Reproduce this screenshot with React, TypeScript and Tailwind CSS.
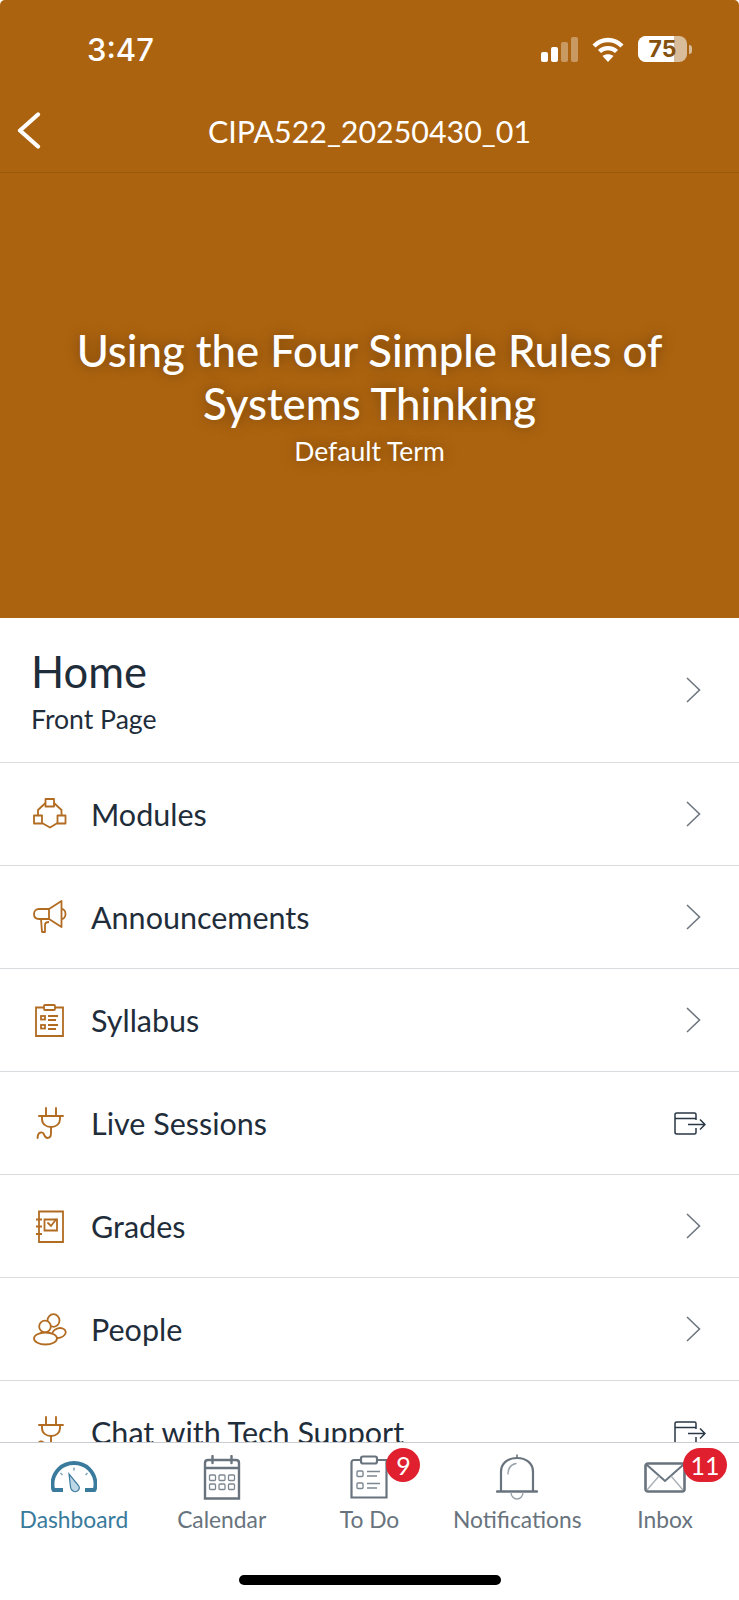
import type { ReactNode } from "react";

const ModulesIcon = () => (
  <svg width="34" height="32" viewBox="0 0 34 32" fill="none" stroke="#b26c22" strokeWidth="1.8" strokeLinejoin="round">
    <rect x="12.5" y="1" width="8.5" height="7.5" />
    <rect x="1" y="17.5" width="8" height="8" />
    <rect x="24.5" y="17.5" width="8" height="8" />
    <path d="M12.5 5 L5 12 V17.5 M21 5 L28.5 12 V17.5 M9 25 L17 29.5 L24.5 25" />
  </svg>
);

const AnnouncementsIcon = () => (
  <svg width="34" height="34" viewBox="0 0 34 34" fill="none" stroke="#b26c22" strokeWidth="1.8" strokeLinejoin="round">
    <path d="M16 9 H6 C3 9 1 11 1 14 C1 17 3 19 6 19 H16 Z" />
    <path d="M16 9 L28.5 1 V27 L16 19" />
    <path d="M28.5 9 C31 9 32.5 11.5 32.5 14 C32.5 16.5 31 19 28.5 19" />
    <path d="M8 19 L9 32 H12 V25 C12 23 14 22 16 22" />
  </svg>
);

const SyllabusIcon = () => (
  <svg width="32" height="33" viewBox="0 0 32 33" fill="none" stroke="#b26c22" strokeWidth="1.8">
    <path d="M11 3.5 H3 V32 H30 V3.5 H22" />
    <rect x="11" y="1" width="11" height="5" rx="1" />
    <rect x="8" y="12" width="4" height="3.5" />
    <rect x="8" y="21" width="4" height="3.5" />
    <path d="M15 12 H25 M15 16 H23 M15 21 H25 M15 25 H23" />
  </svg>
);

const PlugIcon = () => (
  <svg width="32" height="33" viewBox="0 0 32 33" fill="none" stroke="#b26c22" strokeWidth="1.9" strokeLinecap="round">
    <path d="M13 1 V9 M23 1 V9 M6 9 H30 M9 9 V12 C9 17 13 20 18 20 C23 20 27 17 27 12 V9" />
    <path d="M18 20 V26 C18 29 16.5 31 14.5 31 C12 31 11.5 28.5 10.5 26.5 C9.5 24.8 6 25 5 28 L4.5 31" />
  </svg>
);

const GradesIcon = () => (
  <svg width="32" height="33" viewBox="0 0 32 33" fill="none" stroke="#b26c22" strokeWidth="1.8">
    <path d="M6 8 V1.5 H30 V32 H6 V25" />
    <path d="M6 8 V25" />
    <path d="M3 9.5 H9 M3 16.5 H9 M3 24 H9" />
    <path d="M11.5 9.5 H24 V20.5 H11.5 Z" />
    <path d="M15 13 L18 16 L23 9.5" strokeLinecap="round" />
  </svg>
);

const PeopleIcon = () => (
  <svg width="34" height="33" viewBox="0 0 34 33" fill="none" stroke="#b26c22" strokeWidth="1.8">
    <ellipse cx="20.5" cy="7.5" rx="6" ry="6.3" />
    <circle cx="12" cy="13.5" r="5.8" fill="#fff" />
    <ellipse cx="26" cy="20" rx="6.8" ry="4.8" transform="rotate(-15 26 20)" />
    <ellipse cx="12.5" cy="25.5" rx="11.5" ry="6" fill="#fff" />
  </svg>
);

const ChevronIcon = () => (
  <svg width="15" height="26" viewBox="0 0 15 26" fill="none" stroke="#6e7780" strokeWidth="1.6">
    <path d="M1 1 L13.5 13 L1 25" />
  </svg>
);

const ExternalIcon = () => (
  <svg width="32" height="23" viewBox="0 0 32 23" fill="none" stroke="#2a3744" strokeWidth="1.5" strokeLinejoin="round">
    <path d="M22 8 V2.5 C22 1.5 21.3 1 20.5 1 H3 C2 1 1 1.7 1 2.5 V20.5 C1 21.3 1.8 22 3 22 H20.5 C21.3 22 22 21.3 22 20.5 V16" />
    <path d="M1 6.5 H22 M14 12.5 H30.5 M26 7.5 L31 12.5 L26 17.5" />
  </svg>
);

const DashboardIcon = () => (
  <svg width="46" height="32" viewBox="0 0 46 32" fill="none">
    <path d="M12 29 H2.5 C1.8 27 1.5 25.5 1.5 23.5 C1.5 11 11 2 23 2 C35 2 44.5 11 44.5 23.5 C44.5 25.5 44.2 27 43.5 29 H34" stroke="#3a7a9c" strokeWidth="3.8" strokeLinejoin="round" />
    <path d="M18 13 L19.5 26 C20 30 23.5 31.5 26 30.3 C28.5 29 29 26.5 27.5 24.5 Z" fill="#bcd7e6" stroke="#3a7a9c" strokeWidth="1.2" />
    <path d="M23 6.5 V9.5 M9.5 12 L11.5 14 M36.5 12 L34.5 14" stroke="#7ea6bc" strokeWidth="1.5" />
  </svg>
);

const CalendarIcon = () => (
  <svg width="38" height="45" viewBox="0 0 38 45" fill="none" stroke="#68737d">
    <path d="M2 8 C2 6 3 5 5 5 H33 C35 5 36 6 36 8 V43.5 H2 Z" strokeWidth="2.4" />
    <path d="M2 13 H36" strokeWidth="2.4" />
    <path d="M9.5 1 V8 M28.5 1 V8" strokeWidth="2.4" strokeLinecap="round" />
    <g strokeWidth="1.3" stroke="#7d8790">
      <rect x="6.5" y="20" width="6" height="5.5" rx="1" />
      <rect x="16" y="20" width="6" height="5.5" rx="1" />
      <rect x="25.5" y="20" width="6" height="5.5" rx="1" />
      <rect x="6.5" y="29" width="6" height="5.5" rx="1" />
      <rect x="16" y="29" width="6" height="5.5" rx="1" />
      <rect x="25.5" y="29" width="6" height="5.5" rx="1" />
    </g>
  </svg>
);

const TodoIcon = () => (
  <svg width="38" height="44" viewBox="0 0 38 44" fill="none" stroke="#68737d">
    <path d="M11 5 H4 C2.5 5 1.5 6 1.5 7.5 V42.5 H36.5 V5 H27" strokeWidth="2.2" />
    <rect x="11" y="1.5" width="16" height="7" rx="2" strokeWidth="2.2" />
    <g strokeWidth="1.4" stroke="#7d8790">
      <rect x="7" y="16" width="6" height="5.5" rx="1" />
      <rect x="7" y="28" width="6" height="5.5" rx="1" />
      <path d="M17 16.5 H30 M17 21 H27 M17 28.5 H30 M17 33 H27" />
    </g>
  </svg>
);

const BellIcon = () => (
  <svg width="42" height="46" viewBox="0 0 42 46" fill="none" stroke="#68737d">
    <path d="M1 37.5 H41" strokeWidth="2.4" strokeLinecap="round" />
    <path d="M5 37 V18 C5 9 12 4 21 4 C30 4 37 9 37 18 V37" strokeWidth="2.2" />
    <path d="M21 0.5 V4" strokeWidth="1.6" />
    <path d="M12 20 C12 14 15 10.5 20 9.5" stroke="#9aa2aa" strokeWidth="1.4" strokeLinecap="round" />
    <path d="M15 38 C15 42 17.5 45 21 45 C24.5 45 27 42 27 38" stroke="#9aa2aa" strokeWidth="1.4" />
  </svg>
);

const InboxIcon = () => (
  <svg width="42" height="31" viewBox="0 0 42 31" fill="none" stroke="#68737d">
    <rect x="1.5" y="1.5" width="39" height="28" rx="2.5" strokeWidth="2.6" />
    <path d="M3 3 L21 19 L39 3" strokeWidth="2" />
    <path d="M3 28 L15 14 M39 28 L27 14" stroke="#aab1b7" strokeWidth="1.4" />
  </svg>
);

const items: { label: string; icon: ReactNode; external?: boolean }[] = [
  { label: "Modules", icon: <ModulesIcon /> },
  { label: "Announcements", icon: <AnnouncementsIcon /> },
  { label: "Syllabus", icon: <SyllabusIcon /> },
  { label: "Live Sessions", icon: <PlugIcon />, external: true },
  { label: "Grades", icon: <GradesIcon /> },
  { label: "People", icon: <PeopleIcon /> },
  { label: "Chat with Tech Support", icon: <PlugIcon />, external: true },
];

const tabs: { label: string; icon: ReactNode; badge?: string; active?: boolean }[] = [
  { label: "Dashboard", icon: <DashboardIcon />, active: true },
  { label: "Calendar", icon: <CalendarIcon /> },
  { label: "To Do", icon: <TodoIcon />, badge: "9" },
  { label: "Notifications", icon: <BellIcon /> },
  { label: "Inbox", icon: <InboxIcon />, badge: "11" },
];

const StatusBar = () => (
  <div className="relative h-[100px] shrink-0">
    <span className="absolute left-[87px] top-[31px] font-['Inter',sans-serif] text-[31px] leading-[38px] font-medium text-white">
      3:47
    </span>
    <div className="absolute right-[47px] top-[36px] flex items-center">
      <svg width="37" height="25" viewBox="0 0 37 25" className="mr-[14px]">
        <rect x="0" y="15" width="7" height="10" rx="2" fill="#fff" />
        <rect x="10" y="10" width="7" height="15" rx="2" fill="#fff" />
        <rect x="20" y="5" width="7" height="20" rx="2" fill="#fff" fillOpacity="0.35" />
        <rect x="30" y="0" width="7" height="25" rx="2" fill="#fff" fillOpacity="0.35" />
      </svg>
      <svg width="32" height="25" viewBox="0 0 32 25" fill="none" stroke="#fff" strokeWidth="4.4" className="mr-[14px]">
        <path d="M2 9 C10 1 22 1 30 9" />
        <path d="M7.5 14.5 C12 10 20 10 24.5 14.5" />
        <path d="M16 25 L10.5 19 C13.5 16.5 18.5 16.5 21.5 19 Z" fill="#fff" stroke="none" />
      </svg>
      <div className="relative flex h-[26px] w-[49px] items-center justify-center overflow-hidden rounded-[8px] bg-[#d9bd9a]">
        <div className="absolute inset-y-0 left-0 w-[36px] bg-white" />
        <span className="relative font-['Inter',sans-serif] text-[23px] leading-none font-bold text-[#84500f]">75</span>
      </div>
      <div className="ml-[2px] h-[9px] w-[3px] rounded-r-full bg-[#d9bd9a]" />
    </div>
  </div>
);

export default function App() {
  return (
    <div className="flex h-[1600px] w-[739px] flex-col overflow-hidden bg-white font-['Lato',sans-serif] text-[#1f2d3b]">
      <header className="h-[618px] shrink-0 rounded-t-[5px] bg-[#ac630f] text-white">
        <StatusBar />
        <div className="relative flex h-[73px] items-center justify-center border-b border-[#9c590c]">
          <svg width="24" height="37" viewBox="0 0 24 37" fill="none" stroke="#fff" strokeWidth="4.2" strokeLinecap="round" strokeLinejoin="round" className="absolute left-[17px] top-[12px]">
            <path d="M21 2.5 L3 18.5 L21 34.5" />
          </svg>
          <span className="mb-[10px] text-[30.4px] leading-none">CIPA522_20250430_01</span>
        </div>
        <div className="flex flex-col items-center pt-[151px] text-center [text-shadow:0_0_14px_rgba(0,0,0,0.35)]">
          <h1 className="w-[640px] text-[43.7px] leading-[53px] font-medium">Using the Four Simple Rules of Systems Thinking</h1>
          <p className="mt-[4px] text-[26.5px] leading-[34px]">Default Term</p>
        </div>
      </header>

      <main className="min-h-0 flex-1 overflow-hidden">
        <div className="flex h-[145px] items-center justify-between border-b border-[#d9dcdf] pr-[38px] pl-[31px]">
          <div>
            <h2 className="text-[43.5px] leading-[54px]">Home</h2>
            <p className="mt-[3px] text-[26.6px] leading-[36px]">Front Page</p>
          </div>
          <ChevronIcon />
        </div>
        {items.map((item) => (
          <div key={item.label} className="flex h-[103px] items-center border-b border-[#d9dcdf] px-[33px]">
            <div className="flex w-[58px] shrink-0 items-center">{item.icon}</div>
            <span className="flex-1 text-[30.5px] leading-none">{item.label}</span>
            {item.external ? (
              <ExternalIcon />
            ) : (
              <div className="mr-[5px]">
                <ChevronIcon />
              </div>
            )}
          </div>
        ))}
      </main>

      <nav className="h-[158px] shrink-0 border-t border-[#c9cdd1] bg-white">
        <div className="grid h-[110px] grid-cols-5">
          {tabs.map((tab) => (
            <div key={tab.label} className="flex flex-col items-center">
              <div className="relative mt-[11px] flex h-[46px] items-center justify-center">
                {tab.icon}
                {tab.badge && (
                  <span
                    className={
                      tab.badge.length > 1
                        ? "absolute top-[-6px] left-[39px] flex h-[34px] w-[44px] items-center justify-center rounded-full bg-[#e0202e] text-[25px] leading-none text-white"
                        : "absolute top-[-6px] left-[36px] flex h-[34px] w-[34px] items-center justify-center rounded-full bg-[#e0202e] text-[25px] leading-none text-white"
                    }
                  >
                    {tab.badge}
                  </span>
                )}
              </div>
              <span className={tab.active ? "mt-[4px] text-[22.8px] leading-[30px] text-[#3a7a9c]" : "mt-[4px] text-[22.8px] leading-[30px] text-[#68737d]"}>
                {tab.label}
              </span>
            </div>
          ))}
        </div>
        <div className="mx-auto mt-[22px] h-[10px] w-[262px] rounded-full bg-black" />
      </nav>
    </div>
  );
}
